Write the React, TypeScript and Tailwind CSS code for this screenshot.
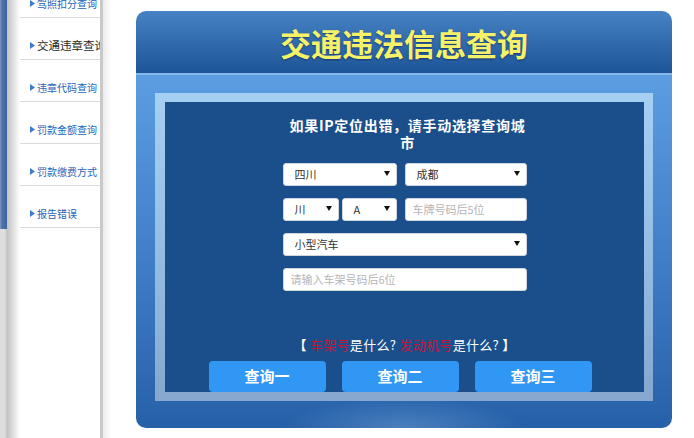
import React from "react";

const cjk = "[font-family:'Noto_Sans_CJK_SC','Noto_Sans',sans-serif]";

function Caret() {
  return (
    <svg width="6" height="5" viewBox="0 0 6 5" className="mb-[3px] shrink-0">
      <path d="M0 0H6L3 5Z" fill="#111" />
    </svg>
  );
}

function Sel({ label, w }: { label: string; w: string }) {
  return (
    <div
      className={`flex h-[23px] items-center justify-between rounded-[3px] border border-[#cfd6de] bg-white pl-[11px] pr-[6px] text-[11px] text-[#333] ${w}`}
    >
      <span>{label}</span>
      <Caret />
    </div>
  );
}

function Inp({ ph, w }: { ph: string; w: string }) {
  return (
    <div
      className={`flex h-[23px] items-center rounded-[3px] border border-[#cfd6de] bg-white pl-[7px] text-[11px] text-[#b5b5b5] ${w}`}
    >
      {ph}
    </div>
  );
}

const items = ["驾照扣分查询", "交通违章查询", "违章代码查询", "罚款金额查询", "罚款缴费方式", "报告错误"];

export default function App() {
  return (
    <div className={`flex h-[438px] w-[694px] overflow-hidden bg-white ${cjk}`}>
      {/* sidebar */}
      <div className="flex h-full w-[110px] shrink-0">
        <div className="h-full w-[20px] bg-[linear-gradient(to_right,#dedede_0px,#dedede_5px,#c2c2c2_7px,#ffffff_100%)]">
          <div className="h-[229px] w-[7px] bg-[linear-gradient(to_right,#7f97bd_0px,#4f74aa_2px,#3d64a0_7px)]" />
        </div>
        <div className="h-full w-[80px] overflow-hidden bg-white">
          <div className="-mt-[24px] flex flex-col">
            {items.map((t, i) => (
              <div
                key={t}
                className="flex h-[42px] items-center gap-[2px] border-b border-[#dadada] pl-[10px] pt-[14px] whitespace-nowrap"
              >
                <svg width="5" height="7" viewBox="0 0 5 7" className="shrink-0">
                  <path d="M0 0L5 3.5L0 7Z" fill="#3d7ccc" />
                </svg>
                <span
                  className={
                    i === 1
                      ? "text-[11.5px] text-[#1e2a1e]"
                      : "text-[10px] text-[#1f63b8]"
                  }
                >
                  {t}
                </span>
              </div>
            ))}
          </div>
        </div>
        <div className="h-full w-[3px] bg-[#c9c9c9]" />
        <div className="h-full w-[7px] bg-[linear-gradient(to_right,#ececec,#fafafa)]" />
      </div>

      {/* main */}
      <div className="flex-1 pl-[26px] pt-[11px]">
        <div className="flex h-[417px] w-[536px] flex-col overflow-hidden rounded-[10px]">
          <div className="flex h-[64px] shrink-0 items-center justify-center border-b-2 border-[#86b9e8] bg-[linear-gradient(to_bottom,#4682c4,#1d5597)]">
            <span className="text-[31px] leading-none font-bold text-[#f5f26a] [text-shadow:0_1px_2px_rgba(0,0,40,0.45)]">
              交通违法信息查询
            </span>
          </div>
          <div className="flex-1 bg-[radial-gradient(ellipse_120px_30px_at_50%_100%,rgba(120,165,215,0.45),transparent),linear-gradient(to_bottom,#5c9de2,#3f7cc6_55%,#2660a8)] px-[19px] pb-[27px] pt-[18px]">
            <div className="h-full bg-[linear-gradient(to_bottom,#a6cff4,#94b9e0_60%,#87a7cd)] py-[9px] pl-[10px] pr-[9px]">
              <div className="flex h-full flex-col items-center bg-[#1b4f8b] pt-[15px]">
                <div className="ml-[6px] w-[246px] text-center text-[14px] leading-[17px] font-bold tracking-[0.7px] text-white">
                  如果IP定位出错，请手动选择查询城市
                </div>
                <div className="mt-[12px] flex w-[244px] flex-col gap-[12px]">
                  <div className="flex gap-[8px]">
                    <Sel label="四川" w="w-[114px]" />
                    <Sel label="成都" w="w-[122px]" />
                  </div>
                  <div className="flex gap-[8px]">
                    <div className="flex w-[114px] gap-[3px]">
                      <Sel label="川" w="w-[56px]" />
                      <Sel label="A" w="w-[55px]" />
                    </div>
                    <Inp ph="车牌号码后5位" w="w-[122px]" />
                  </div>
                  <Sel label="小型汽车" w="w-[244px]" />
                  <Inp ph="请输入车架号码后6位" w="w-[244px]" />
                </div>
                <div className="mt-[46px] text-[13px] leading-[16px] tracking-[0.3px] text-white">
                  <span className="font-bold">【</span>
                  <span className="text-[#c0183c]"> 车架号</span>是什么?{" "}
                  <span className="text-[#c0183c]">发动机号</span>是什么?{" "}
                  <span className="font-bold">】</span>
                </div>
                <div className="mr-[9px] mt-[8px] flex gap-[16px]">
                  {["查询一", "查询二", "查询三"].map((b) => (
                    <div
                      key={b}
                      className="flex h-[31px] w-[117px] items-center justify-center rounded-[4px] bg-[#3197f5] text-[15px] font-bold text-white"
                    >
                      {b}
                    </div>
                  ))}
                </div>
              </div>
            </div>
          </div>
        </div>
      </div>
    </div>
  );
}
